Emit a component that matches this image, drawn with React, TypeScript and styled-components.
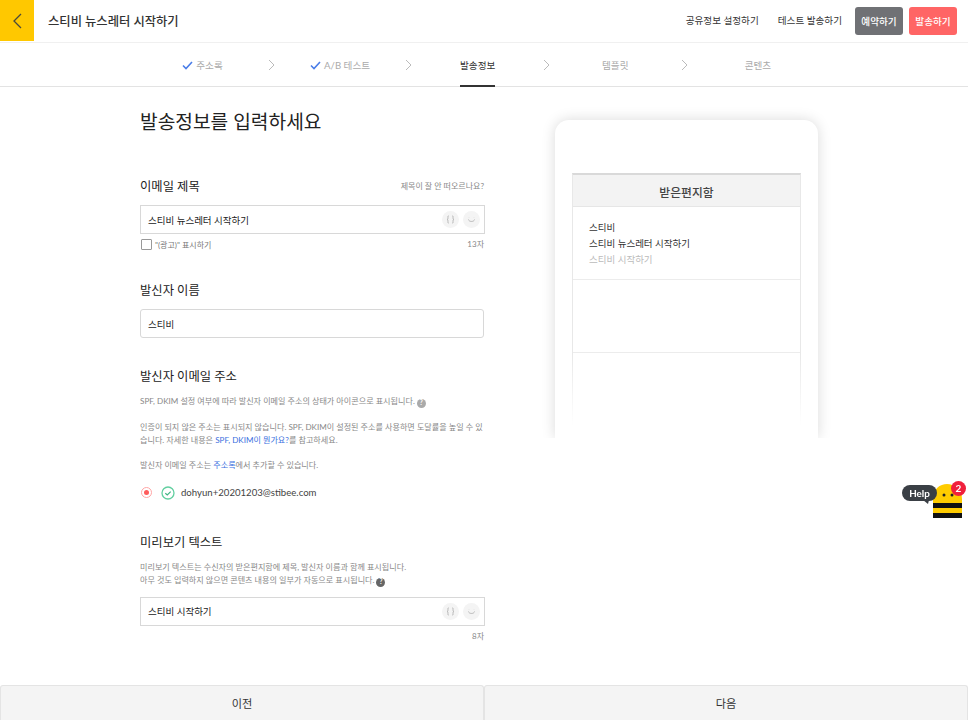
import React from "react";
import styled, { createGlobalStyle } from "styled-components";

const Global = createGlobalStyle`
  html, body { margin: 0; padding: 0; height: 100%; background: #fff; }
  body { font-family: Lato, "Noto Sans CJK KR", sans-serif; color: #333; overflow: hidden; }
  * { box-sizing: border-box; }
`;

const Page = styled.div`
  height: 720px;
  display: flex;
  flex-direction: column;
  overflow: hidden;
`;
const Header = styled.header`
  height: 43px;
  flex: none;
  display: flex;
  align-items: flex-start;
  border-bottom: 1px solid #f0f0f0;
`;
const BackButton = styled.div`
  width: 34px;
  height: 41px;
  background: #ffc800;
  display: flex;
  align-items: center;
  justify-content: center;
`;
const HeaderTitle = styled.h1`
  margin: 0 0 0 14px;
  font-size: 12.3px;
  line-height: 44px;
  font-weight: 500;
  color: #333;
  flex: 1;
`;
const HeaderLink = styled.span<{ $tight?: boolean }>`
  font-size: 9.6px;
  font-weight: 400;
  line-height: 41px;
  color: #333;
  margin-right: ${(p) => (p.$tight ? "13px" : "19px")};
`;
const ActionButton = styled.div<{ $bg: string; $gap: number }>`
  width: 48px;
  height: 28px;
  margin-top: 7px;
  margin-right: ${(p) => p.$gap}px;
  border-radius: 3px;
  background: ${(p) => p.$bg};
  color: #fff;
  font-size: 9.6px;
  font-weight: 500;
  display: flex;
  align-items: center;
  justify-content: center;
`;
const Steps = styled.nav`
  height: 44px;
  flex: none;
  display: flex;
  padding-left: 140.5px;
  border-bottom: 1px solid #e3e3e3;
`;
const Step = styled.div<{ $last?: boolean }>`
  width: 124px;
  height: 44px;
  padding-left: ${(p) => (p.$last ? "10px" : "0")};
  display: flex;
  justify-content: center;
`;
const StepLabel = styled.div<{ $active?: boolean }>`
  height: 44px;
  padding-top: 2px;
  display: flex;
  align-items: center;
  gap: 3px;
  font-size: 9.6px;
  font-weight: 400;
  color: ${(p) => (p.$active ? "#333" : "#aaa")};
  border-bottom: 2px solid ${(p) => (p.$active ? "#333" : "transparent")};
`;
const ChevronBox = styled.div`
  width: 13.6px;
  height: 43px;
  display: flex;
  align-items: center;
  justify-content: center;
`;
const Main = styled.main`
  flex: 1;
  min-height: 0;
  display: flex;
  padding-left: 140px;
  overflow: hidden;
`;
const Form = styled.div`
  width: 345px;
  flex: none;
`;
const PageTitle = styled.h2`
  margin: 21px 0 39px;
  font-size: 19.2px;
  line-height: 28px;
  font-weight: 400;
  color: #222;
`;
const Section = styled.section<{ $gap: number }>`
  margin-bottom: ${(p) => p.$gap}px;
`;
const HeadingRow = styled.div`
  display: flex;
  justify-content: space-between;
  align-items: center;
  height: 20px;
  margin-right: 1px;
`;
const Heading = styled.h3`
  margin: 0;
  padding-top: 3px;
  font-size: 12.3px;
  line-height: 20px;
  font-weight: 400;
  color: #222;
`;
const Hint = styled.span`
  padding-top: 1px;
  font-size: 8px;
  color: #888;
`;
const Field = styled.div<{ $square?: boolean; $narrow?: boolean; $top: number }>`
  height: 29px;
  margin-top: ${(p) => p.$top}px;
  width: ${(p) => (p.$narrow ? "344px" : "345px")};
  border: 1px solid #d8d8d8;
  border-radius: ${(p) => (p.$square ? "0" : "3px")};
  display: flex;
  align-items: center;
  gap: 4px;
  padding: 0 4px 0 7px;
`;
const FieldText = styled.span`
  flex: 1;
  font-size: 9.5px;
  font-weight: 400;
  color: #222;
`;
const RoundIcon = styled.span`
  width: 17px;
  height: 17px;
  border-radius: 50%;
  background: #f4f4f4;
  display: flex;
  align-items: center;
  justify-content: center;
`;
const SubRow = styled.div`
  display: flex;
  justify-content: space-between;
  margin-right: 1px;
`;
const CheckLabel = styled.label`
  display: flex;
  align-items: center;
  gap: 3px;
  margin: 5px 0 0 1px;
  font-size: 8px;
  color: #777;
`;
const CheckBox = styled.span`
  width: 11px;
  height: 11px;
  border: 1px solid #999;
  border-radius: 1px;
  background: #fff;
`;
const Count = styled.span`
  margin-top: 4px;
  font-size: 8px;
  line-height: 12px;
  color: #888;
  margin-left: auto;
`;
const Para = styled.p<{ $mt: number }>`
  margin: ${(p) => p.$mt}px 0 0;
  font-size: 8.1px;
  line-height: 12.8px;
  color: #888;
`;
const Link = styled.span`
  color: #3a6fe0;
`;
const HelpDot = styled.span<{ $dark?: boolean }>`
  display: inline-flex;
  align-items: center;
  justify-content: center;
  width: 9px;
  height: 9px;
  margin-left: 2px;
  vertical-align: -1px;
  border-radius: 50%;
  background: ${(p) => (p.$dark ? "#666" : "#aaa")};
  color: #fff;
  font-size: 6.5px;
  font-weight: 700;
  line-height: 1;
`;
const SenderRow = styled.div`
  display: flex;
  align-items: center;
  margin-top: 12px;
  height: 17px;
`;
const Radio = styled.span`
  width: 11px;
  height: 11px;
  margin: 0 9px 0 1px;
  border-radius: 50%;
  border: 1.5px solid #ffa5a5;
  display: flex;
  align-items: center;
  justify-content: center;
  &::after {
    content: "";
    width: 5px;
    height: 5px;
    border-radius: 50%;
    background: #ff5c5c;
  }
`;
const SenderMail = styled.span`
  margin-left: 6px;
  font-size: 9.6px;
  color: #444;
`;
const Preview = styled.aside`
  width: 263px;
  height: 318px;
  flex: none;
  margin: 33px 0 0 70px;
  padding: 53px 17px 0;
  background: #fff;
  border-radius: 14px 14px 0 0;
  box-shadow: 0 0 14px rgba(0, 0, 0, 0.15);
  clip-path: inset(-20px -20px 0 -20px);
`;
const Inbox = styled.div`
  position: relative;
  height: 265px;
  width: 229px;
  border-left: 1px solid #e8e8e8;
  border-right: 1px solid #e8e8e8;
  border-top: 2px solid #d9d9d9;
  &::after {
    content: "";
    position: absolute;
    left: -1px;
    right: -1px;
    bottom: 0;
    height: 85px;
    background: linear-gradient(rgba(255, 255, 255, 0), #fff 85%);
  }
`;
const InboxTitle = styled.div`
  height: 32px;
  background: #f3f3f3;
  border-bottom: 1px solid #e6e6e6;
  text-align: center;
  font-size: 11.8px;
  line-height: 35px;
  font-weight: 500;
  color: #444;
`;
const Mail = styled.div`
  height: 73px;
  padding: 13px 16px 0;
  border-bottom: 1px solid #ececec;
`;
const MailLine = styled.div<{ $muted?: boolean }>`
  font-size: 9.5px;
  line-height: 16.2px;
  color: ${(p) => (p.$muted ? "#bbb" : "#333")};
`;
const Footer = styled.footer`
  height: 35px;
  flex: none;
  display: flex;
`;
const FooterButton = styled.div`
  flex: 1;
  background: #f4f4f4;
  border: 1px solid #e4e4e4;
  border-bottom: none;
  border-radius: 3px 3px 0 0;
  display: flex;
  align-items: center;
  justify-content: center;
  font-size: 11.2px;
  font-weight: 400;
  color: #333;
`;
const HelpWidget = styled.div`
  position: fixed;
  left: 902px;
  top: 481px;
  width: 66px;
  height: 38px;
`;
const Bubble = styled.div`
  position: absolute;
  left: 0;
  top: 4px;
  width: 35px;
  height: 16px;
  border-radius: 8px;
  background: #3a3f45;
  color: #fff;
  font-size: 9.8px;
  font-weight: 700;
  line-height: 16px;
  text-align: center;
  z-index: 1;
`;
const Badge = styled.div`
  position: absolute;
  left: 49px;
  top: 0;
  width: 15px;
  height: 15px;
  border-radius: 50%;
  background: #f0203c;
  color: #fff;
  font-size: 10px;
  font-weight: 700;
  line-height: 15px;
  text-align: center;
`;
const BeeArt = styled.svg`
  position: absolute;
  left: 0;
  top: 0;
`;

const Chevron = () => (
  <svg width="7" height="12" viewBox="0 0 7 12" fill="none" stroke="#bbb" strokeWidth="1">
    <path d="M1 1l5 5-5 5" />
  </svg>
);
const Check = () => (
  <svg width="11" height="9" viewBox="0 0 11 9" fill="none" stroke="#4a7de8" strokeWidth="1.6">
    <path d="M1 4.500l3 3 6-6.500" />
  </svg>
);
const Braces = () => (
  <svg width="9" height="9" viewBox="0 0 9 9" fill="none" stroke="#aaa" strokeWidth="0.8">
    <path d="M2.800 .8C1.600 .8 2 2 2 3.200 2 4 1.600 4.500 1 4.500c.6 0 1 .5 1 1.300C2 7 1.600 8.200 2.800 8.200M6.200 .8C7.400 .8 7 2 7 3.200c0 .8.4 1.300 1 1.300-.6 0-1 .5-1 1.300C7 7 7.400 8.200 6.200 8.200" />
  </svg>
);
const Smile = () => (
  <svg width="9" height="9" viewBox="0 0 9 9" fill="none" stroke="#aaa" strokeWidth="0.8">
    <path d="M1.500 4.500c.3 2.600 5.700 2.600 6 0" />
    <path d="M2 2.400v.6M7 2.400v.6" stroke="#ddd" />
  </svg>
);
const FieldIcons = () => (
  <>
    <RoundIcon><Braces /></RoundIcon>
    <RoundIcon><Smile /></RoundIcon>
  </>
);

export default function App() {
  return (
    <Page>
      <Global />
      <Header>
        <BackButton>
          <svg width="12" height="18" viewBox="0 0 12 18" fill="none" stroke="#4a4a3a" strokeWidth="1.3">
            <path d="M10 2L3 9l7 7" />
          </svg>
        </BackButton>
        <HeaderTitle>스티비 뉴스레터 시작하기</HeaderTitle>
        <HeaderLink>공유정보 설정하기</HeaderLink>
        <HeaderLink $tight>테스트 발송하기</HeaderLink>
        <ActionButton $bg="#707175" $gap={6}>예약하기</ActionButton>
        <ActionButton $bg="#ff6565" $gap={11}>발송하기</ActionButton>
      </Header>
      <Steps>
        <Step><StepLabel><Check />주소록</StepLabel></Step>
        <ChevronBox><Chevron /></ChevronBox>
        <Step><StepLabel><Check />A/B 테스트</StepLabel></Step>
        <ChevronBox><Chevron /></ChevronBox>
        <Step><StepLabel $active>발송정보</StepLabel></Step>
        <ChevronBox><Chevron /></ChevronBox>
        <Step><StepLabel>템플릿</StepLabel></Step>
        <ChevronBox><Chevron /></ChevronBox>
        <Step $last><StepLabel>콘텐츠</StepLabel></Step>
      </Steps>
      <Main>
        <Form>
          <PageTitle>발송정보를 입력하세요</PageTitle>
          <Section $gap={29}>
            <HeadingRow>
              <Heading>이메일 제목</Heading>
              <Hint>제목이 잘 안 떠오르나요?</Hint>
            </HeadingRow>
            <Field $square $top={10}>
              <FieldText>스티비 뉴스레터 시작하기</FieldText>
              <FieldIcons />
            </Field>
            <SubRow>
              <CheckLabel><CheckBox />"(광고)" 표시하기</CheckLabel>
              <Count>13자</Count>
            </SubRow>
          </Section>
          <Section $gap={27}>
            <HeadingRow><Heading>발신자 이름</Heading></HeadingRow>
            <Field $narrow $top={10}>
              <FieldText>스티비</FieldText>
            </Field>
          </Section>
          <Section $gap={30}>
            <HeadingRow><Heading>발신자 이메일 주소</Heading></HeadingRow>
            <Para $mt={10}>SPF, DKIM 설정 여부에 따라 발신자 이메일 주소의 상태가 아이콘으로 표시됩니다.<HelpDot>?</HelpDot></Para>
            <Para $mt={13}>인증이 되지 않은 주소는 표시되지 않습니다. SPF, DKIM이 설정된 주소를 사용하면 도달률을 높일 수 있습니다. 자세한 내용은 <Link>SPF, DKIM이 뭔가요?</Link>를 참고하세요.</Para>
            <Para $mt={13}>발신자 이메일 주소는 <Link>주소록</Link>에서 추가할 수 있습니다.</Para>
            <SenderRow>
              <Radio />
              <svg width="14" height="14" viewBox="0 0 14 14" fill="none">
                <circle cx="7" cy="7" r="6" stroke="#62cfa0" strokeWidth="1.300" />
                <path d="M4.300 7.200l2 1.800 3.400-3.400" stroke="#3fb583" strokeWidth="1.200" />
              </svg>
              <SenderMail>dohyun+20201203@stibee.com</SenderMail>
            </SenderRow>
          </Section>
          <Section $gap={0}>
            <HeadingRow><Heading>미리보기 텍스트</Heading></HeadingRow>
            <Para $mt={10}>미리보기 텍스트는 수신자의 받은편지함에 제목, 발신자 이름과 함께 표시됩니다.<br />아무 것도 입력하지 않으면 콘텐츠 내용의 일부가 자동으로 표시됩니다.<HelpDot $dark>?</HelpDot></Para>
            <Field $square $top={10}>
              <FieldText>스티비 시작하기</FieldText>
              <FieldIcons />
            </Field>
            <SubRow><Count>8자</Count></SubRow>
          </Section>
        </Form>
        <Preview>
          <Inbox>
            <InboxTitle>받은편지함</InboxTitle>
            <Mail>
              <MailLine>스티비</MailLine>
              <MailLine>스티비 뉴스레터 시작하기</MailLine>
              <MailLine $muted>스티비 시작하기</MailLine>
            </Mail>
            <Mail />
          </Inbox>
        </Preview>
      </Main>
      <Footer>
        <FooterButton>이전</FooterButton>
        <FooterButton>다음</FooterButton>
      </Footer>
      <HelpWidget>
        <BeeArt width="66" height="38" viewBox="0 0 66 38">
          <path d="M31 37V18C31 8 38 3 45 3s15 5 15 15v19z" fill="#ffcc00" />
          <rect x="31" y="22" width="29" height="5" fill="#111" />
          <rect x="31" y="32" width="29" height="5" fill="#111" />
          <circle cx="42" cy="14" r="1.500" fill="#222" />
          <circle cx="50" cy="14" r="1.500" fill="#222" />
          <path d="M21 19h6l-1 4z" fill="#3a3f45" />
        </BeeArt>
        <Bubble>Help</Bubble>
        <Badge>2</Badge>
      </HelpWidget>
    </Page>
  );
}
